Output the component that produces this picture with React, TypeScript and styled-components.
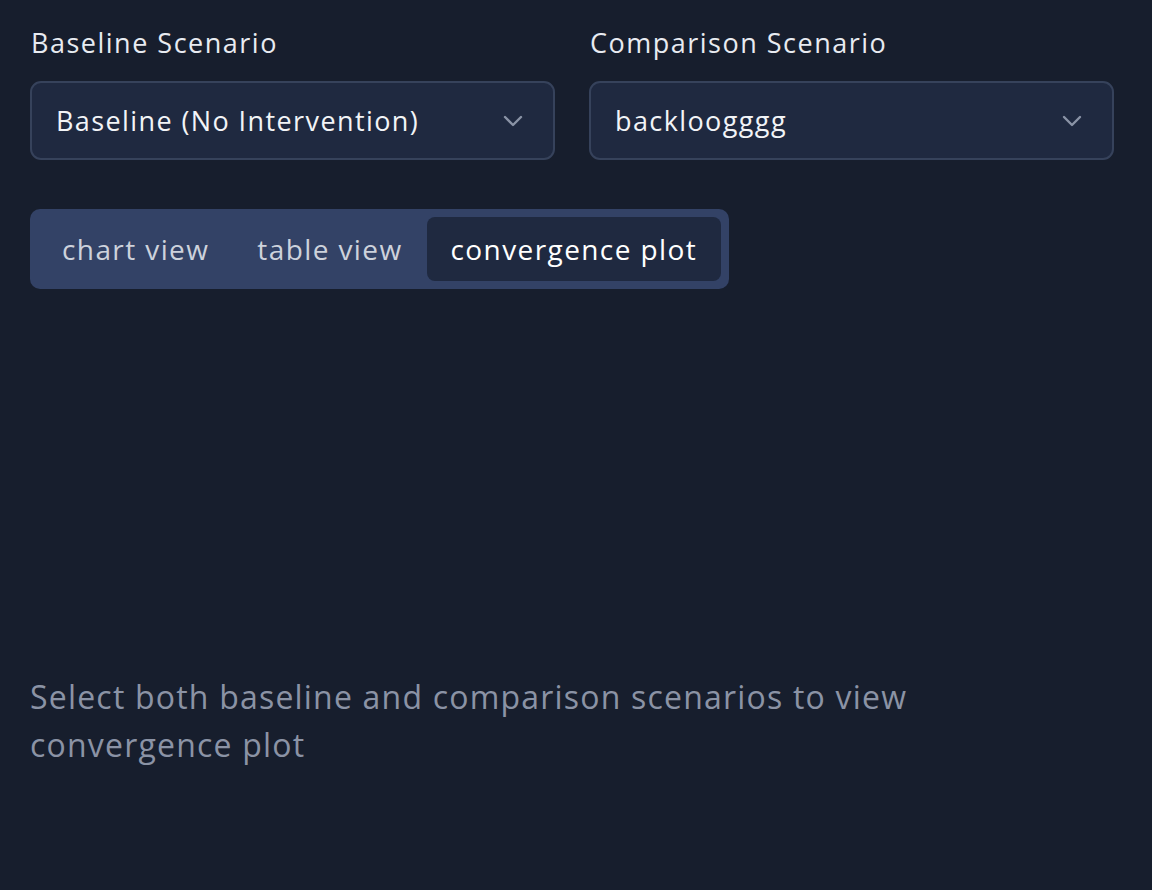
import React from "react";
import styled, { createGlobalStyle } from "styled-components";

const Global = createGlobalStyle`
  html, body { margin: 0; padding: 0; background: #171e2d; }
  body { font-family: "Open Sans", "Noto Sans", sans-serif; }
  * { box-sizing: border-box; }
`;

const Page = styled.div`
  min-height: 890px;
  background: #171e2d;
  padding: 25px 38px 0 30px;
  color: #e6e9ef;
`;

const SelectRow = styled.div`
  display: grid;
  grid-template-columns: 1fr 1fr;
  column-gap: 34px;
`;

const Field = styled.div`
  display: flex;
  flex-direction: column;
  gap: 20px;
`;

const Label = styled.div`
  font-size: 27px;
  line-height: 36px;
  letter-spacing: 1.5px;
  color: #e8ebf1;
  padding-left: 1px;
`;

const SelectBox = styled.div`
  height: 79px;
  border: 2px solid #36425b;
  border-radius: 11px;
  background: #1f2940;
  display: flex;
  align-items: center;
  justify-content: space-between;
  padding: 0 30px 0 24px;
  font-size: 27px;
  letter-spacing: 1.4px;
  color: #f2f4f7;
`;

const Chevron = () => (
  <svg width="20" height="12" viewBox="0 0 20 12" fill="none">
    <path d="M2 2l8 8 8-8" stroke="#8a93a6" strokeWidth="2.4" strokeLinecap="round" strokeLinejoin="round" />
  </svg>
);

const TabList = styled.div`
  margin-top: 49px;
  display: inline-flex;
  padding: 8px;
  background: #334266;
  border-radius: 10px;
`;

const Tab = styled.div<{ $active?: boolean }>`
  height: 64px;
  padding: 0 24px;
  display: flex;
  align-items: center;
  font-size: 28px;
  letter-spacing: 1.4px;
  border-radius: 8px;
  color: ${(p) => (p.$active ? "#ffffff" : "#cdd2dc")};
  background: ${(p) => (p.$active ? "#1f2940" : "transparent")};
`;

const Empty = styled.div`
  margin-top: 384px;
  max-width: 900px;
  font-size: 32px;
  line-height: 48px;
  letter-spacing: 1.2px;
  color: #8b93a5;
`;

export default function App() {
  return (
    <>
      <Global />
      <Page>
        <SelectRow>
          <Field>
            <Label>Baseline Scenario</Label>
            <SelectBox>
              <span>Baseline (No Intervention)</span>
              <Chevron />
            </SelectBox>
          </Field>
          <Field>
            <Label>Comparison Scenario</Label>
            <SelectBox>
              <span>backloogggg</span>
              <Chevron />
            </SelectBox>
          </Field>
        </SelectRow>
        <div>
          <TabList>
            <Tab>chart view</Tab>
            <Tab>table view</Tab>
            <Tab $active>convergence plot</Tab>
          </TabList>
        </div>
        <Empty>Select both baseline and comparison scenarios to view convergence plot</Empty>
      </Page>
    </>
  );
}
